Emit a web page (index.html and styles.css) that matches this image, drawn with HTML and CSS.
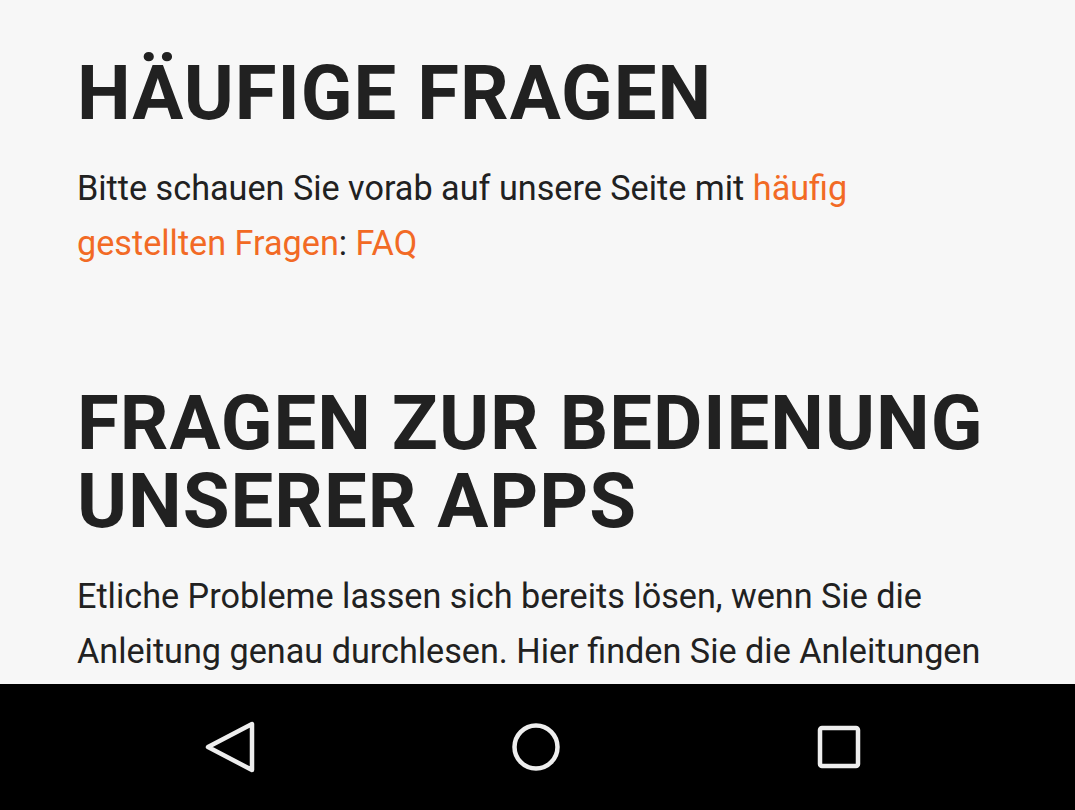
FILE: index.html
```html
<!DOCTYPE html>
<html lang="de">
<head>
<meta charset="utf-8">
<link rel="stylesheet" href="styles.css">
</head>
<body>
<div class="screen">
  <main class="content">
    <h1 class="title">HÄUFIGE FRAGEN</h1>
    <p class="text">Bitte schauen Sie vorab auf unsere Seite mit <a class="link" href="#">häufig gestellten Fragen</a>: <a class="link" href="#">FAQ</a></p>
    <h1 class="title title-second">FRAGEN ZUR BEDIENUNG UNSERER APPS</h1>
    <p class="text">Etliche Probleme lassen sich bereits lösen, wenn Sie die Anleitung genau durchlesen. Hier finden Sie die Anleitungen zu unseren Apps.</p>
  </main>
  <nav class="navbar">
    <svg class="nav-icon" width="60" height="60" viewBox="0 0 60 60"><path d="M49 7 L49 53 L5 30 Z" fill="none" stroke="#eee" stroke-width="4.5" stroke-linejoin="round"/></svg>
    <svg class="nav-icon" width="60" height="60" viewBox="0 0 60 60"><circle cx="30" cy="30" r="21.5" fill="none" stroke="#eee" stroke-width="4.5"/></svg>
    <svg class="nav-icon" width="60" height="60" viewBox="0 0 60 60"><rect x="11" y="11" width="38" height="38" rx="2" fill="none" stroke="#eee" stroke-width="4.5"/></svg>
  </nav>
</div>
</body>
</html>
```
FILE: styles.css
```css
html, body {
  margin: 0;
  padding: 0;
  background: #f7f7f7;
}
.screen {
  width: 1075px;
  height: 810px;
  display: flex;
  flex-direction: column;
  overflow: hidden;
}
.content {
  flex: 1;
  overflow: hidden;
  padding: 0 40px 0 77px;
  font-family: Roboto, "Liberation Sans", sans-serif;
  color: #212121;
}
.title {
  margin: 54px 0 0;
  font-size: 76px;
  line-height: 78px;
  font-weight: 700;
  letter-spacing: 1px;
}
.title-second {
  margin-top: 113px;
}
.text {
  max-width: 910px;
  margin: 29px 0 0;
  font-size: 34.2px;
  line-height: 55px;
  font-weight: 400;
}
.link {
  color: #f26a25;
  text-decoration: none;
}
.navbar {
  height: 126px;
  flex: none;
  background: #000;
  display: flex;
  justify-content: center;
  align-items: center;
  gap: 243px;
  padding-right: 3px;
}
.nav-icon {
  display: block;
}
```
